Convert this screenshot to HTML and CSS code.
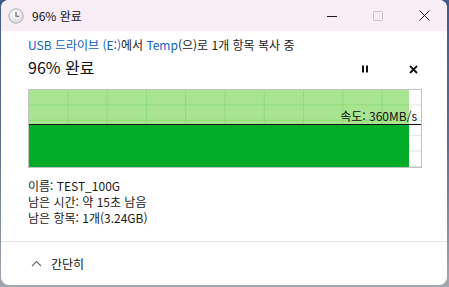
FILE: index.html
```html
<!DOCTYPE html>
<html lang="ko">
<head>
<meta charset="utf-8">
<link rel="stylesheet" href="styles.css">
</head>
<body>
<div class="window">
  <div class="titlebar">
    <svg class="clock" width="16" height="16" viewBox="0 0 16 16">
      <defs>
        <radialGradient id="cg" cx="0.4" cy="0.35" r="0.7">
          <stop offset="0" stop-color="#ffffff"/>
          <stop offset="1" stop-color="#d9d9d9"/>
        </radialGradient>
      </defs>
      <circle cx="8" cy="8" r="7.2" fill="url(#cg)" stroke="#a8a8a8" stroke-width="0.9"/>
      <path d="M8 4.2V8.3H10.6" fill="none" stroke="#555" stroke-width="1.1" stroke-linecap="round"/>
    </svg>
    <span class="title">96% 완료</span>
    <div class="controls">
      <span class="ctl"><svg width="10" height="10" viewBox="0 0 10 10"><path d="M0 5.5H10" stroke="#1a1a1a" stroke-width="1"/></svg></span>
      <span class="ctl"><svg width="10" height="10" viewBox="0 0 10 10"><rect x="0.5" y="0.5" width="9" height="9" rx="1" fill="none" stroke="#c4c4c4" stroke-width="1"/></svg></span>
      <span class="ctl"><svg width="11" height="11" viewBox="0 0 11 11"><path d="M0.5 0.5L10.5 10.5M10.5 0.5L0.5 10.5" stroke="#1a1a1a" stroke-width="1"/></svg></span>
    </div>
  </div>
  <div class="content">
    <div class="from"><span class="link">USB 드라이브 (E:)</span>에서 <span class="link">Temp</span>(으)로 1개 항목 복사 중</div>
    <div class="headrow">
      <div class="big">96% 완료</div>
      <div class="actions">
        <svg width="8" height="8" viewBox="0 0 8 8"><rect x="1" y="0.5" width="2" height="7" fill="#111"/><rect x="5" y="0.5" width="2" height="7" fill="#111"/></svg>
        <svg width="9" height="9" viewBox="0 0 9 9"><path d="M1 1L8 8M8 1L1 8" stroke="#111" stroke-width="1.8"/></svg>
      </div>
    </div>
    <div class="graph">
      <div class="done">
        <div class="fill"></div>
      </div>
      <div class="line"></div>
      <div class="speed">속도: 360MB/s</div>
    </div>
    <div class="details">
      <div>이름: TEST_100G</div>
      <div>남은 시간: 약 15초 남음</div>
      <div>남은 항목: 1개(3.24GB)</div>
    </div>
  </div>
  <div class="footer">
    <svg class="chev" width="11" height="7" viewBox="0 0 11 7"><path d="M1 6L5.5 1.5L10 6" fill="none" stroke="#6e6e6e" stroke-width="1.1"/></svg>
    <span>간단히</span>
  </div>
</div>
</body>
</html>
```
FILE: styles.css
```css
html, body {
  margin: 0;
  padding: 0;
}
body {
  width: 449px;
  height: 287px;
  background: linear-gradient(180deg, #3f5b8c 0%, #5d6f8e 50%, #a3a7ae 100%);
  font-family: "Noto Sans CJK KR", "Noto Sans", sans-serif;
  font-size: 12px;
  color: #1a1a1a;
  overflow: hidden;
}
.window {
  margin-left: 1px;
  width: 446px;
  height: 285px;
  background: #ffffff;
  border-radius: 8px;
  overflow: hidden;
  display: flex;
  flex-direction: column;
  box-sizing: border-box;
}
.titlebar {
  height: 31px;
  flex: none;
  background: #f9eef6;
  display: flex;
  align-items: center;
  padding-left: 7px;
}
.clock {
  flex: none;
}
.title {
  margin-left: 8px;
  font-size: 12px;
  line-height: 16px;
  color: #111;
}
.controls {
  margin-left: auto;
  display: flex;
  height: 100%;
}
.ctl {
  width: 46px;
  display: flex;
  align-items: center;
  justify-content: center;
}
.content {
  padding: 5px 25px 0 27px;
  flex: 1;
}
.from {
  line-height: 18px;
  height: 18px;
  color: #1a1a1a;
}
.link {
  color: #0f5fc4;
}
.headrow {
  display: flex;
  align-items: center;
  height: 26px;
}
.big {
  font-size: 16px;
  line-height: 26px;
  color: #111;
}
.actions {
  margin-left: auto;
  display: flex;
  align-items: center;
  gap: 40px;
  padding-right: 4px;
  padding-top: 4px;
}
.graph {
  margin-top: 9px;
  width: 394px;
  height: 79px;
  box-sizing: border-box;
  border: 1px solid #c3c3c3;
  position: relative;
  background-color: #ffffff;
  background-image:
    linear-gradient(90deg, rgba(120, 210, 110, 0.35) 1px, transparent 1px),
    linear-gradient(180deg, rgba(120, 210, 110, 0.35) 1px, transparent 1px);
  background-size: 39.3px 15.4px;
  background-position: -1px -1px;
}
.done {
  position: absolute;
  left: 0;
  top: 0;
  bottom: 0;
  width: 380px;
  background-color: #a9e490;
  background-image:
    linear-gradient(90deg, #8edc78 1px, transparent 1px),
    linear-gradient(180deg, #8edc78 1px, transparent 1px);
  background-size: 39.3px 15.4px;
  background-position: -1px -1px;
}
.fill {
  position: absolute;
  left: 0;
  right: 0;
  top: 35px;
  bottom: 0;
  background: #04ad27;
}
.line {
  position: absolute;
  left: 0;
  right: 0;
  top: 34px;
  height: 1px;
  background: #111;
}
.speed {
  position: absolute;
  right: 4px;
  top: 18px;
  line-height: 16px;
  font-size: 12px;
  color: #111;
}
.details {
  margin-top: 10px;
  line-height: 16px;
  color: #1a1a1a;
}
.footer {
  height: 43px;
  flex: none;
  border-top: 1px solid #e5e5e5;
  display: flex;
  align-items: center;
  padding-left: 30px;
  gap: 9px;
  color: #111;
}
.chev {
  flex: none;
}
```
